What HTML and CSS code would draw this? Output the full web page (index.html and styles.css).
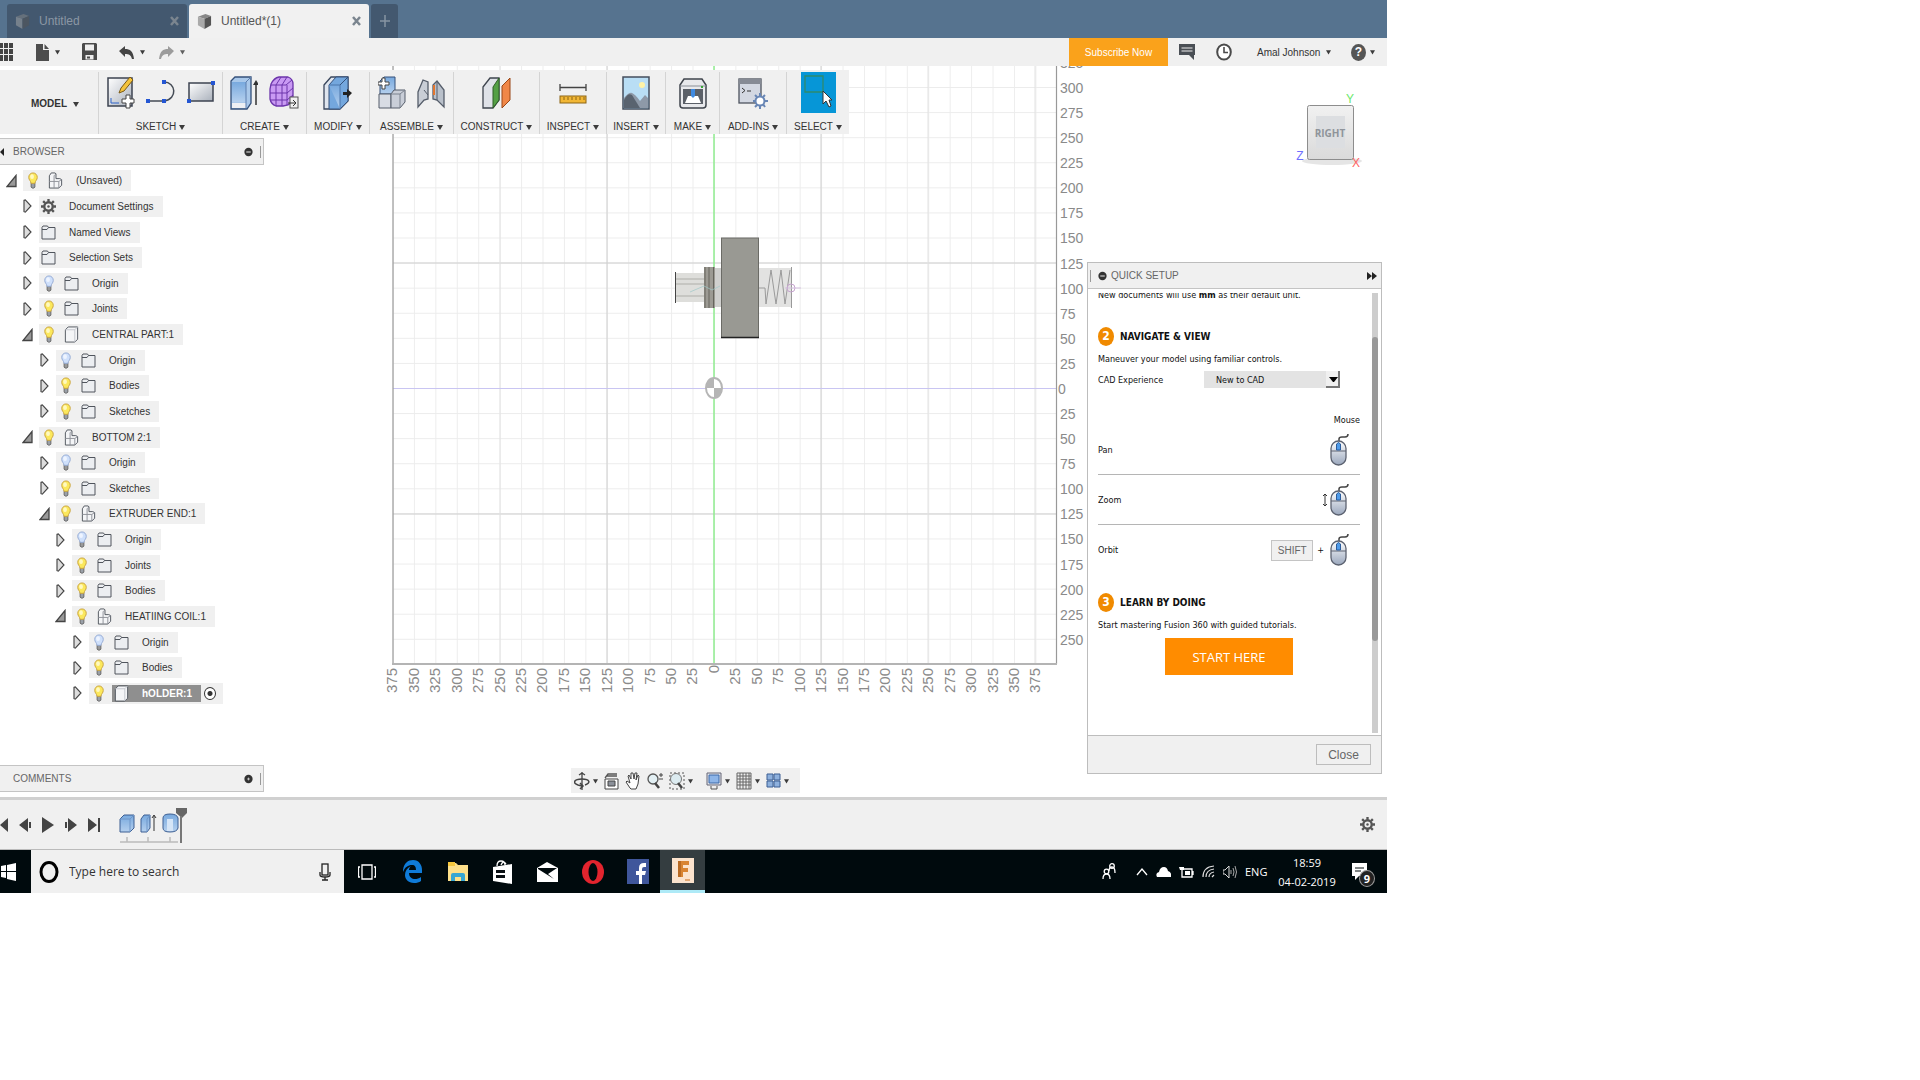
FILE: index.html
```
<!DOCTYPE html>
<html lang="en">
<head>
    <meta charset="UTF-8">
    <meta name="viewport" content="width=device-width, initial-scale=1.0">
    <title>Untitled*(1) - Fusion 360</title>
    <link rel="stylesheet" href="styles.css">
</head>
<body>
    <!-- shared icons -->
    <svg class="defs" width="0" height="0">
        <defs>
            <linearGradient id="g-grey" x1="0" y1="0" x2="1" y2="1"><stop offset="0" stop-color="#fff"/><stop offset="1" stop-color="#a9b0bb"/></linearGradient>
            <linearGradient id="g-blue" x1="0" y1="0" x2="0" y2="1"><stop offset="0" stop-color="#78a9de"/><stop offset="1" stop-color="#b5d0ee"/></linearGradient>
            <linearGradient id="g-cube" x1="0" y1="0" x2="0" y2="1"><stop offset="0" stop-color="#f1f1f1"/><stop offset="1" stop-color="#dadada"/></linearGradient>
            <linearGradient id="g-mouse" x1="0" y1="0" x2="0" y2="1"><stop offset="0" stop-color="#fff"/><stop offset="1" stop-color="#9aa7bd"/></linearGradient>
        </defs>
        <symbol id="bulb-on" viewBox="0 0 12 18"><path d="M4 11h4v5l-1 1H5l-1-1z" fill="#9aa0a8" stroke="#666"/><path d="M6 1a4.500 4.500 0 0 0-4.500 4.800C1.500 8.500 3.500 9 4 12h4c.5-3 2.500-3.500 2.500-6.200A4.500 4.500 0 0 0 6 1z" fill="#fbe85c" stroke="#c9a23c"/><ellipse cx="5" cy="5" rx="2" ry="2.500" fill="#fff9c0"/></symbol>
        <symbol id="bulb-off" viewBox="0 0 12 18"><path d="M4 11h4v5l-1 1H5l-1-1z" fill="#999" stroke="#666"/><path d="M6 1a4.500 4.500 0 0 0-4.500 4.800C1.500 8.500 3.500 9 4 12h4c.5-3 2.500-3.500 2.500-6.200A4.500 4.500 0 0 0 6 1z" fill="#cfe0fb" stroke="#93a9d3"/><ellipse cx="5" cy="5" rx="2" ry="2.500" fill="#eef4ff"/></symbol>
        <symbol id="folder" viewBox="0 0 15 16"><path d="M1 14.500V3L2 1.500h4.500l1 1.500h6.500v11.500z" fill="#eceef1" stroke="#50555d"/><path d="M1 5h5l1.500-2" fill="none" stroke="#50555d"/></symbol>
        <symbol id="body" viewBox="0 0 15 18"><path d="M1 4l3-3h10v13l-3 3H1z" fill="#f4f5f7" stroke="#50555d" stroke-linejoin="round"/><path d="M1 4h10l3-3M11 4v13" fill="none" stroke="#c2c6cc"/></symbol>
        <symbol id="component" viewBox="0 0 15 18"><path d="M1 4l2-3h4l1 1v5h4l2 1v6l-3 3H1z" fill="#f4f5f7" stroke="#50555d" stroke-linejoin="round"/><path d="M6 4v13M6 10h5l3-2M11 10v7M1 10h5M6 4l2-2" fill="none" stroke="#8d9198"/></symbol>
        <symbol id="gear" viewBox="0 0 16 16"><circle cx="8" cy="8" r="4.500" fill="none" stroke="#555" stroke-width="2.500"/><circle cx="8" cy="8" r="1.300" fill="#555"/><path d="M8 0v3M8 13v3M0 8h3M13 8h3M2.300 2.300l2 2M11.700 11.700l2 2M2.300 13.700l2-2M11.700 4.300l2-2" stroke="#555" stroke-width="2.500"/></symbol>
        <symbol id="closed" viewBox="0 0 10 16"><path d="M1 1.500l1.500-.5L9 8l-6.500 7L1 14.500z" fill="#ddd" stroke="#444" stroke-width="1.300"/></symbol>
        <symbol id="open" viewBox="0 0 11 13"><path d="M10 1v11H1z" fill="#999" stroke="#444" stroke-width="1.300"/></symbol>
        <symbol id="caret" viewBox="0 0 6 6"><path d="M0 1h6L3 6z" fill="#3c3c3c"/></symbol>
        <symbol id="minus" viewBox="0 0 10 10"><circle cx="5" cy="5" r="4.600" fill="#333"/><path d="M2.500 5h5" stroke="#fff"/></symbol>
        <symbol id="plus" viewBox="0 0 10 10"><circle cx="5" cy="5" r="4.600" fill="#333"/><path d="M3.500 5h3M5 3.500v3" stroke="#ccc"/></symbol>
        <symbol id="doc" viewBox="0 0 16 18"><path d="M1 4l8-3 6 2-7 3z" fill="#888"/><path d="M1 4l7 2v11l-7-4z" fill="#aaa"/><path d="M8 6l7-3v10l-7 4z" fill="#555"/></symbol>
        <symbol id="mouse" viewBox="0 0 22 32"><path d="M11 8V5q0-2 3-2h3q3 0 3-3" fill="none" stroke="#444" stroke-width="1.500"/><rect x="3" y="7" width="15" height="24" rx="7.500" fill="url(#g-mouse)" stroke="#5c6270" stroke-width="1.300"/><path d="M3 17h15" stroke="#5c6270"/><path d="M8.500 16V10q2-3 4 0v6z" fill="#4e9bea" stroke="#2c5d9c"/></symbol>
    </svg>

    <div class="app">
        <header class="tabs">
            <div class="tab">
                <svg class="tab-icon" viewBox="0 0 16 18"><use href="#doc"/></svg>
                <span>Untitled</span>
                <button class="tab-close" aria-label="Close Untitled"><svg width="9" height="10" viewBox="0 0 9 10"><path d="M1 1l7 8M8 1l-7 8" stroke="currentColor" stroke-width="2.500"/></svg></button>
            </div>
            <div class="tab active">
                <svg class="tab-icon" viewBox="0 0 16 18"><use href="#doc"/></svg>
                <span>Untitled*(1)</span>
                <button class="tab-close" aria-label="Close Untitled*(1)"><svg width="9" height="10" viewBox="0 0 9 10"><path d="M1 1l7 8M8 1l-7 8" stroke="currentColor" stroke-width="2.500"/></svg></button>
            </div>
            <button class="tab-new" aria-label="New tab"><svg width="10" height="12" viewBox="0 0 10 12"><path d="M0 6h10M5 0v12" stroke="#8794a3" stroke-width="1.500"/></svg></button>
        </header>

        <div class="quickbar">
            <button class="qb-grid" aria-label="Data panel"><svg width="14" height="18" viewBox="0 0 14 18"><path d="M0 0h3v5H0zM4 0h4v5H4zM9 0h4v5H9zM0 6h3v5H0zM4 6h4v5H4zM9 6h4v5H9zM0 12h3v6H0zM4 12h4v6H4zM9 12h4v6H9z" fill="#444"/></svg></button>
            <button class="qb-file" aria-label="File"><svg width="13" height="17" viewBox="0 0 13 17"><path d="M0 0h7v6h6v11H0zM8.500 0L13 5H8.500z" fill="#4d4d4d"/></svg><svg class="caret"><use href="#caret"/></svg></button>
            <button class="qb-save" aria-label="Save"><svg width="15" height="18" viewBox="0 0 15 18"><path d="M1 0h13l1 1v16H0V1z" fill="#4a4a4a"/><path d="M3 1.500h9v6H3zM3.500 12h8v4.500h-8z" fill="#eee"/><path d="M5 13.500h3v2H5z" fill="#4a4a4a"/></svg></button>
            <button class="qb-undo" aria-label="Undo"><svg width="15" height="13" viewBox="0 0 15 13"><path d="M0 5l6-5v3c5 0 8 2 9 10h-2c-1-4-3-5-7-5v3z" fill="#444"/></svg><svg class="caret"><use href="#caret"/></svg></button>
            <button class="qb-redo" aria-label="Redo"><svg width="15" height="13" viewBox="0 0 15 13"><path d="M15 5L9 0v3C4 3 1 5 0 13h2c1-4 3-5 7-5v3z" fill="#888"/></svg><svg class="caret"><use href="#caret"/></svg></button>
            <div class="qb-right">
                <button class="subscribe">Subscribe Now</button>
                <button class="qb-chat" aria-label="Comments"><svg width="16" height="16" viewBox="0 0 16 16"><path d="M0 0h16v11h-1v5l-5-5H0z" fill="#4a4f55"/><path d="M2.500 4h11M2.500 7h11" stroke="#eee"/></svg></button>
                <button class="qb-clock" aria-label="Job status"><svg width="16" height="18" viewBox="0 0 16 18"><ellipse cx="8" cy="9" rx="6.800" ry="7.500" fill="#fff" stroke="#4a4a4a" stroke-width="2"/><path d="M8 4v5.500h4" fill="none" stroke="#4a4a4a" stroke-width="1.600"/></svg></button>
                <button class="qb-user">Amal Johnson<svg class="caret"><use href="#caret"/></svg></button>
                <button class="qb-help" aria-label="Help"><span class="help-dot">?</span><svg class="caret"><use href="#caret"/></svg></button>
            </div>
        </div>

        <main class="workspace">
            <svg class="scene" viewBox="0 66 1387 731" preserveAspectRatio="xMinYMin meet">
                <defs>
                    <pattern id="cells" x="713.950" y="388" width="21.430" height="25.080" patternUnits="userSpaceOnUse"><path d="M0 0h21.430M0 0v25.080" fill="none" stroke="#ececec" stroke-width="1.800"/></pattern>
                </defs>
                <rect x="393" y="66" width="663" height="598" fill="url(#cells)"/>
                <path d="M607 66v598M821 66v598M393 263h663M393 514h663" stroke="#cfcfcf"/>
                <path d="M500 66v598M928 66v598M1035 66v598" stroke="#e2e2e2"/>
                <path d="M393 388.500h663" stroke="#c9c5f2"/>
                <path d="M714 66v598" stroke="#8fec8f" stroke-width="1.500"/>
                <path d="M393 66v598M1056.500 66v598" stroke="#999" stroke-width="1.200"/>
                <path d="M392 664h665" stroke="#b4b4b4" stroke-width="2"/>

                <!-- extruder model -->
                <rect x="675" y="273" width="30" height="29" fill="#dededb"/>
                <path d="M675 279h30M675 284h30M675 296h30" stroke="#c6c6c2" stroke-width="2"/>
                <path d="M675.500 272v31" stroke="#444"/>
                <rect x="704" y="267" width="11" height="41" fill="#9c9a93"/>
                <path d="M705 267v41M709 267v41M713.500 267v41" stroke="#66645d"/>
                <rect x="715" y="268" width="7" height="39" fill="#d0d0ce"/>
                <path d="M690 292l14-6 8 4 8-4" fill="none" stroke="#9fc9c9" stroke-opacity=".7"/>
                <rect x="759" y="268" width="32" height="39" fill="#e2e2e1"/>
                <path d="M759 288h6l1 16 5-34 5 34 5-34 4 34 5-34" fill="none" stroke="#9a9a9a" stroke-linejoin="round"/>
                <path d="M791.500 267v41" stroke="#999"/>
                <circle cx="791" cy="288" r="4" fill="none" stroke="#c7a4cf"/>
                <path d="M785 288h16" stroke="#d5bfe0"/>
                <rect x="721" y="238" width="38" height="100" fill="#999993"/>
                <path d="M721 238h38M721.500 238v100M758.500 238v100" stroke="#6b6b66"/>
                <path d="M721 337.500h38" stroke="#222" stroke-width="1.500"/>
                <ellipse cx="714" cy="388" rx="8" ry="10" fill="#fff" stroke="#b5b5b5" stroke-width="2"/>
                <path d="M714 388v-10a8 10 0 0 0-8 10zM714 388v10a8 10 0 0 0 8-10z" fill="#b5b5b5"/>

                <g class="ruler">
                    <text x="1060" y="68">325</text><text x="1060" y="93">300</text><text x="1060" y="118">275</text>
                    <text x="1060" y="143">250</text><text x="1060" y="168">225</text><text x="1060" y="193">200</text>
                    <text x="1060" y="218">175</text><text x="1060" y="243">150</text><text x="1060" y="269">125</text>
                    <text x="1060" y="294">100</text><text x="1060" y="319">75</text><text x="1060" y="344">50</text>
                    <text x="1060" y="369">25</text><text x="1058" y="394">0</text><text x="1060" y="419">25</text>
                    <text x="1060" y="444">50</text><text x="1060" y="469">75</text><text x="1060" y="494">100</text>
                    <text x="1060" y="519">125</text><text x="1060" y="544">150</text><text x="1060" y="570">175</text>
                    <text x="1060" y="595">200</text><text x="1060" y="620">225</text><text x="1060" y="645">250</text>
                </g>
                <g class="ruler ruler-x" transform="rotate(-90)">
                    <text x="-668" y="397">375</text><text x="-668" y="419">350</text><text x="-668" y="440">325</text>
                    <text x="-668" y="462">300</text><text x="-668" y="483">275</text><text x="-668" y="505">250</text>
                    <text x="-668" y="526">225</text><text x="-668" y="547">200</text><text x="-668" y="569">175</text>
                    <text x="-668" y="590">150</text><text x="-668" y="612">125</text><text x="-668" y="633">100</text>
                    <text x="-668" y="655">75</text><text x="-668" y="676">50</text><text x="-668" y="697">25</text>
                    <text x="-665" y="719">0</text><text x="-668" y="740">25</text><text x="-668" y="762">50</text>
                    <text x="-668" y="783">75</text><text x="-668" y="805">100</text><text x="-668" y="826">125</text>
                    <text x="-668" y="848">150</text><text x="-668" y="869">175</text><text x="-668" y="890">200</text>
                    <text x="-668" y="912">225</text><text x="-668" y="933">250</text><text x="-668" y="955">275</text>
                    <text x="-668" y="976">300</text><text x="-668" y="998">325</text><text x="-668" y="1019">350</text>
                    <text x="-668" y="1040">375</text>
                </g>

                <!-- view cube -->
                <ellipse cx="1332" cy="161" rx="30" ry="4" fill="#ccc" fill-opacity=".5"/>
                <rect x="1307.500" y="105.500" width="46" height="54" rx="2" fill="url(#g-cube)" stroke="#8d8d8d"/>
                <rect x="1316" y="116" width="29" height="32" fill="#dcdee1"/>
                <text class="cube-face" x="1330" y="137">RIGHT</text>
                <text class="axis axis-y" x="1350" y="103">Y</text>
                <text class="axis axis-x" x="1356" y="167">X</text>
                <text class="axis axis-z" x="1300" y="160">Z</text>
            </svg>

            <nav class="toolbar">
                <button class="mode">MODEL<svg class="caret"><use href="#caret"/></svg></button>
                <div class="group sketch">
                    <div class="icons">
                        <svg width="28" height="34" viewBox="0 0 28 34"><rect x="1" y="2" width="24" height="28" fill="url(#g-grey)" stroke="#3c4350" stroke-width="1.500"/><path d="M4 27h8M4 27v-5" stroke="#2c63c9"/><path d="M12 17l2-5 9-11 3 3-9 11z" fill="#f4c33c" stroke="#7a5a17"/><path d="M19 19h4v4h4v4h-4v5h-4v-5h-4v-4h4z" fill="#fff" stroke="#444"/></svg>
                        <svg width="30" height="34" viewBox="0 0 30 34"><path d="M2 25h16c14-2 12-19 0-19" fill="none" stroke="#444b55" stroke-width="1.500"/><path d="M0 23h4v4H0zM16 23h4v4h-4zM16 4h4v4h-4z" fill="#2456d3"/></svg>
                        <svg width="28" height="34" viewBox="0 0 28 34"><rect x="2" y="7" width="24" height="18" fill="url(#g-grey)" stroke="#3c4350" stroke-width="1.500"/><path d="M0 23h4v4H0zM24 5h4v4h-4z" fill="#2456d3"/></svg>
                    </div>
                    <button>SKETCH<svg class="caret"><use href="#caret"/></svg></button>
                </div>
                <div class="group create">
                    <div class="icons">
                        <svg width="28" height="34" viewBox="0 0 28 34"><path d="M1 5l4-4h16v26l-4 6H1z" fill="#a9c8ea" stroke="#34507a" stroke-width="1.300"/><path d="M2 6h14v20H2z" fill="url(#g-blue)"/><path d="M2 27h14v5H2z" fill="#eef0f4"/><path d="M16 6l5-5M16 6v26" stroke="#5e7fae"/><path d="M26 7v22" stroke="#333" stroke-width="1.500"/><path d="M23 9l3-5 3 5z" fill="#333"/></svg>
                        <svg width="30" height="34" viewBox="0 0 30 34"><path d="M2 8q3-6 8-7h9q5 2 5 7v12q0 6-5 9l-5 1H7q-5-2-6-7V13z" fill="#c99af3" stroke="#6c35ab" stroke-width="1.300"/><path d="M2 9h15l6-5M1 17h17l6-5M2 24h16l6-5M7 9v21M13 9v21M18 9v20M7 9l5-8M13 9l5-8" fill="none" stroke="#6c35ab"/><rect x="21" y="21" width="8" height="11" fill="#f0f0f0" stroke="#555"/><path d="M19 27h7M24 24l3 3-3 3" fill="none" stroke="#333"/></svg>
                    </div>
                    <button>CREATE<svg class="caret"><use href="#caret"/></svg></button>
                </div>
                <div class="group modify">
                    <div class="icons">
                        <svg width="30" height="34" viewBox="0 0 30 34"><path d="M1 9l7-8h17v24l-8 8H1z" fill="#dfe5ee" stroke="#39465c" stroke-width="1.300"/><path d="M6 9l7-8h12v24l-8 8H6z" fill="#74a7dd" stroke="#34507a"/><path d="M6 9h11v24" fill="url(#g-blue)" stroke="#4c76ab"/><path d="M17 9l8-8" stroke="#34507a"/><path d="M20 16h4v-3l5 4-5 5v-3h-4z" fill="#222"/></svg>
                    </div>
                    <button>MODIFY<svg class="caret"><use href="#caret"/></svg></button>
                </div>
                <div class="group assemble">
                    <div class="icons">
                        <svg width="28" height="34" viewBox="0 0 28 34"><path d="M2 5l4-4h11v17H2z" fill="url(#g-blue)" stroke="#34507a"/><path d="M1 18h12v14H1z" fill="#d8dce4" stroke="#555d6a"/><path d="M13 18l3-4h11v12l-5 6h-9z" fill="#c9ced8" stroke="#555d6a"/><path d="M13 18h9v14M22 18l5-4" fill="none" stroke="#7b828e"/><path d="M4 2h3v4h4v3H7v4H4V9H0V6h4z" fill="#fff" stroke="#444"/></svg>
                        <svg width="28" height="34" viewBox="0 0 28 34"><path d="M1 31V16L6 4l5 2v17l-4 1z" fill="#c9ced6" stroke="#555d6a" stroke-width="1.300"/><path d="M27 31V14L20 5l-4 4v14l4 1z" fill="#b9c0ca" stroke="#555d6a" stroke-width="1.300"/><path d="M7 14l4 5M20 6v18" stroke="#555d6a"/><path d="M17 9v10" stroke="#e2752e" stroke-width="2"/></svg>
                    </div>
                    <button>ASSEMBLE<svg class="caret"><use href="#caret"/></svg></button>
                </div>
                <div class="group construct">
                    <div class="icons">
                        <svg width="30" height="34" viewBox="0 0 30 34"><path d="M1 11l7-9h9v22l-6 8H1z" fill="#dfe2e8" stroke="#3e444e" stroke-width="1.300"/><path d="M11 11l6-9v22l-6 8z" fill="#54a045" stroke="#2f5f28"/><path d="M20 10l8-8v22l-8 8z" fill="#f08748" stroke="#9a4717"/></svg>
                    </div>
                    <button>CONSTRUCT<svg class="caret"><use href="#caret"/></svg></button>
                </div>
                <div class="group inspect">
                    <div class="icons">
                        <svg width="28" height="34" viewBox="0 0 28 34"><path d="M1 8v7M27 8v7M1 11.500h26" stroke="#444" stroke-width="1.300"/><rect x="1" y="20" width="26" height="7" fill="#f2b735" stroke="#8c6414"/><path d="M5 21v3M9 21v3M13 21v3M17 21v3M21 21v3M25 21v3" stroke="#8c6414"/></svg>
                    </div>
                    <button>INSPECT<svg class="caret"><use href="#caret"/></svg></button>
                </div>
                <div class="group insert">
                    <div class="icons">
                        <svg width="28" height="34" viewBox="0 0 28 34"><rect x="1" y="1" width="26" height="32" fill="#b9def5" stroke="#444e5c" stroke-width="1.500"/><circle cx="20" cy="9" r="3" fill="#fff3a6"/><path d="M2 22q5-6 8-5t8 8l5-6 3 3v10H2z" fill="#8e99a8"/><path d="M2 24q4-8 8-5l8 13H2z" fill="#59636f"/></svg>
                    </div>
                    <button>INSERT<svg class="caret"><use href="#caret"/></svg></button>
                </div>
                <div class="group make">
                    <div class="icons">
                        <svg width="28" height="34" viewBox="0 0 28 34"><path d="M1 9l4-6h18l4 6v20q0 3-3 3H4q-3 0-3-3z" fill="#e8e9ec" stroke="#3f444c" stroke-width="1.500"/><path d="M1 10h26" stroke="#8a8f97"/><rect x="4" y="13" width="20" height="15" fill="#5b6068"/><path d="M6 27l3-7h10l3 7z" fill="#fff"/><path d="M12 13h4v7l-2 2-2-2z" fill="#3f8ae0"/><path d="M22 11h2" stroke="#38a838" stroke-width="2"/></svg>
                    </div>
                    <button>MAKE<svg class="caret"><use href="#caret"/></svg></button>
                </div>
                <div class="group addins">
                    <div class="icons">
                        <svg width="30" height="34" viewBox="0 0 30 34"><rect x="1" y="3" width="22" height="24" fill="#d3d8e2" stroke="#4d535e" stroke-width="1.300"/><path d="M1 3h22v5H1z" fill="#868b95"/><path d="M4 12l3 2.500L4 17M9 15h4" fill="none" stroke="#333"/><circle cx="22" cy="25" r="4.500" fill="#fff" stroke="#6886b5" stroke-width="2"/><path d="M22 17v3M22 30v3M15 25h2M27 25h3M17 19l2 2M25 28l2 3M17 31l2-2M25 21l2-2" stroke="#6886b5" stroke-width="2"/></svg>
                    </div>
                    <button>ADD-INS<svg class="caret"><use href="#caret"/></svg></button>
                </div>
                <div class="group select">
                    <div class="icons">
                        <svg class="select-icon" viewBox="0 0 35 41"><path d="M4 4h18v16H4z" fill="none" stroke="#2e8a6d" stroke-width="1.300"/><path d="M22 19v13l3-3 3 6 2-1-2-6h3z" fill="#fff" stroke="#333"/></svg>
                    </div>
                    <button>SELECT<svg class="caret"><use href="#caret"/></svg></button>
                </div>
            </nav>

            <aside class="side">
                <div class="side-head">
                    <span class="collapse"></span>BROWSER
                    <button class="dot" aria-label="Collapse browser"><svg width="9" height="10"><use href="#minus"/></svg></button>
                    <span class="grip"></span>
                </div>
                <ul class="tree">
                    <li class="lv0"><button class="twist" aria-label="Collapse"><svg><use href="#open"/></svg></button><span class="node"><svg class="bulb"><use href="#bulb-on"/></svg><svg class="kind"><use href="#component"/></svg>(Unsaved)</span></li>
                    <li class="lv1"><button class="twist" aria-label="Expand"><svg><use href="#closed"/></svg></button><span class="node plain"><svg class="kind"><use href="#gear"/></svg>Document Settings</span></li>
                    <li class="lv1"><button class="twist" aria-label="Expand"><svg><use href="#closed"/></svg></button><span class="node plain"><svg class="kind"><use href="#folder"/></svg>Named Views</span></li>
                    <li class="lv1"><button class="twist" aria-label="Expand"><svg><use href="#closed"/></svg></button><span class="node plain"><svg class="kind"><use href="#folder"/></svg>Selection Sets</span></li>
                    <li class="lv1"><button class="twist" aria-label="Expand"><svg><use href="#closed"/></svg></button><span class="node"><svg class="bulb"><use href="#bulb-off"/></svg><svg class="kind"><use href="#folder"/></svg>Origin</span></li>
                    <li class="lv1"><button class="twist" aria-label="Expand"><svg><use href="#closed"/></svg></button><span class="node"><svg class="bulb"><use href="#bulb-on"/></svg><svg class="kind"><use href="#folder"/></svg>Joints</span></li>
                    <li class="lv1"><button class="twist" aria-label="Collapse"><svg><use href="#open"/></svg></button><span class="node"><svg class="bulb"><use href="#bulb-on"/></svg><svg class="kind"><use href="#body"/></svg>CENTRAL PART:1</span></li>
                    <li class="lv2"><button class="twist" aria-label="Expand"><svg><use href="#closed"/></svg></button><span class="node"><svg class="bulb"><use href="#bulb-off"/></svg><svg class="kind"><use href="#folder"/></svg>Origin</span></li>
                    <li class="lv2"><button class="twist" aria-label="Expand"><svg><use href="#closed"/></svg></button><span class="node"><svg class="bulb"><use href="#bulb-on"/></svg><svg class="kind"><use href="#folder"/></svg>Bodies</span></li>
                    <li class="lv2"><button class="twist" aria-label="Expand"><svg><use href="#closed"/></svg></button><span class="node"><svg class="bulb"><use href="#bulb-on"/></svg><svg class="kind"><use href="#folder"/></svg>Sketches</span></li>
                    <li class="lv1"><button class="twist" aria-label="Collapse"><svg><use href="#open"/></svg></button><span class="node"><svg class="bulb"><use href="#bulb-on"/></svg><svg class="kind"><use href="#component"/></svg>BOTTOM 2:1</span></li>
                    <li class="lv2"><button class="twist" aria-label="Expand"><svg><use href="#closed"/></svg></button><span class="node"><svg class="bulb"><use href="#bulb-off"/></svg><svg class="kind"><use href="#folder"/></svg>Origin</span></li>
                    <li class="lv2"><button class="twist" aria-label="Expand"><svg><use href="#closed"/></svg></button><span class="node"><svg class="bulb"><use href="#bulb-on"/></svg><svg class="kind"><use href="#folder"/></svg>Sketches</span></li>
                    <li class="lv2"><button class="twist" aria-label="Collapse"><svg><use href="#open"/></svg></button><span class="node"><svg class="bulb"><use href="#bulb-on"/></svg><svg class="kind"><use href="#component"/></svg>EXTRUDER END:1</span></li>
                    <li class="lv3"><button class="twist" aria-label="Expand"><svg><use href="#closed"/></svg></button><span class="node"><svg class="bulb"><use href="#bulb-off"/></svg><svg class="kind"><use href="#folder"/></svg>Origin</span></li>
                    <li class="lv3"><button class="twist" aria-label="Expand"><svg><use href="#closed"/></svg></button><span class="node"><svg class="bulb"><use href="#bulb-on"/></svg><svg class="kind"><use href="#folder"/></svg>Joints</span></li>
                    <li class="lv3"><button class="twist" aria-label="Expand"><svg><use href="#closed"/></svg></button><span class="node"><svg class="bulb"><use href="#bulb-on"/></svg><svg class="kind"><use href="#folder"/></svg>Bodies</span></li>
                    <li class="lv3"><button class="twist" aria-label="Collapse"><svg><use href="#open"/></svg></button><span class="node"><svg class="bulb"><use href="#bulb-on"/></svg><svg class="kind"><use href="#component"/></svg>HEATIING COIL:1</span></li>
                    <li class="lv4"><button class="twist" aria-label="Expand"><svg><use href="#closed"/></svg></button><span class="node"><svg class="bulb"><use href="#bulb-off"/></svg><svg class="kind"><use href="#folder"/></svg>Origin</span></li>
                    <li class="lv4"><button class="twist" aria-label="Expand"><svg><use href="#closed"/></svg></button><span class="node"><svg class="bulb"><use href="#bulb-on"/></svg><svg class="kind"><use href="#folder"/></svg>Bodies</span></li>
                    <li class="lv4"><button class="twist" aria-label="Expand"><svg><use href="#closed"/></svg></button><span class="node current"><svg class="bulb"><use href="#bulb-on"/></svg><label class="picked" for="activate"><svg class="kind"><use href="#body"/></svg>hOLDER:1</label><input type="radio" id="activate" name="active" checked></span></li>
                </ul>
                <div class="side-head">
                    COMMENTS
                    <button class="dot" aria-label="Expand comments"><svg width="9" height="10"><use href="#plus"/></svg></button>
                    <span class="grip"></span>
                </div>
            </aside>

            <section class="setup">
                <div class="setup-head">
                    <span class="grip"></span>
                    <svg width="9" height="10"><use href="#minus"/></svg>
                    <span>QUICK SETUP</span>
                    <button aria-label="Hide panel"><svg width="10" height="8" viewBox="0 0 10 8"><path d="M0 0l5 4-5 4zM5 0l5 4-5 4z" fill="#222"/></svg></button>
                </div>
                <div class="setup-main">
                    <div class="setup-body">
                        <p class="units">New documents will use <b>mm</b> as their default unit.</p>
                        <h2><span class="num">2</span>NAVIGATE &amp; VIEW</h2>
                        <p>Maneuver your model using familiar controls.</p>
                        <div class="cad">
                            <label for="cad">CAD Experience</label>
                            <div class="select-box">
                                <select id="cad"><option>New to CAD</option></select>
                                <span class="select-arrow"></span>
                            </div>
                        </div>
                        <div class="mouse-label">Mouse</div>
                        <div class="nav-row"><span>Pan</span><svg class="mouse"><use href="#mouse"/></svg></div>
                        <div class="nav-row"><span>Zoom</span><svg class="updown" width="6" height="14" viewBox="0 0 6 14"><path d="M3 1v12M1 3l2-2 2 2M1 11l2 2 2-2" fill="none" stroke="#333"/></svg><svg class="mouse"><use href="#mouse"/></svg></div>
                        <div class="nav-row last"><span>Orbit</span><kbd>SHIFT</kbd>+<svg class="mouse"><use href="#mouse"/></svg></div>
                        <h2 class="learn"><span class="num">3</span>LEARN BY DOING</h2>
                        <p>Start mastering Fusion 360 with guided tutorials.</p>
                        <button class="start">START HERE</button>
                    </div>
                    <div class="scroll"><div class="thumb"></div></div>
                </div>
                <div class="setup-foot"><button>Close</button></div>
            </section>

            <div class="viewbar">
                <button aria-label="Orbit"><svg width="16" height="18" viewBox="0 0 16 18"><path d="M8 0v18M5 3l3-2 3 2" fill="none" stroke="#444" stroke-width="1.300"/><path d="M11 13c6-2 5-6-3-6S-2 11 4 13l4 1M6 11l3 3-3 3" fill="none" stroke="#444" stroke-width="1.500"/></svg><svg class="caret"><use href="#caret"/></svg></button>
                <button aria-label="Look at"><svg width="15" height="18" viewBox="0 0 15 18"><path d="M1 7h13v10H1z" fill="#fff" stroke="#444"/><path d="M4 9h7v5H4z" fill="#8b9099" stroke="#444"/><path d="M1 6l3-4h9M3 4h10" fill="none" stroke="#555" stroke-width="1.300"/></svg></button>
                <button aria-label="Pan"><svg width="16" height="18" viewBox="0 0 16 18"><path d="M5 16L1 10l1-1 3 2-2-7 1-1 2 4V1h2l1 6 1-6h2l-1 7 2-5 1 1-1 8-2 5H6z" fill="#fff" stroke="#444"/></svg></button>
                <button aria-label="Zoom"><svg width="16" height="18" viewBox="0 0 16 18"><circle cx="6" cy="7" r="5" fill="#e3f0f4" stroke="#555" stroke-width="1.300"/><path d="M8 11l4 5" stroke="#444" stroke-width="2.500"/><path d="M12 3h4M14 1v4M12 7h4" stroke="#444"/></svg></button>
                <button aria-label="Fit"><svg width="16" height="18" viewBox="0 0 16 18"><path d="M1 17V1h14v16z" fill="none" stroke="#555" stroke-dasharray="2 2"/><circle cx="7" cy="7" r="5.500" fill="#dcebf0" stroke="#777"/><path d="M9 11l4 5" stroke="#444" stroke-width="2.500"/></svg><svg class="caret"><use href="#caret"/></svg></button>
                <button class="display" aria-label="Display settings"><svg width="16" height="18" viewBox="0 0 16 18"><path d="M1 1h14v12H1z" fill="#dfe3ea" stroke="#667"/><path d="M3 3h10v8H3z" fill="#8db5e8" stroke="#3c68a8"/><path d="M5 14v3h6v-3" fill="none" stroke="#555"/></svg><svg class="caret"><use href="#caret"/></svg></button>
                <button aria-label="Grid settings"><svg width="16" height="18" viewBox="0 0 16 18"><path d="M1 1h14v16H1zM4 1v16M7 1v16M10 1v16M13 1v16M1 4h14M1 7h14M1 10h14M1 13h14" fill="#eee" stroke="#666"/></svg><svg class="caret"><use href="#caret"/></svg></button>
                <button aria-label="Viewports"><svg width="15" height="15" viewBox="0 0 15 15"><path d="M1 1h6v6H1zM8 1h6v6H8zM1 8h6v6H1zM8 8h6v6H8z" fill="#8db0dd" stroke="#3d5f93"/></svg><svg class="caret"><use href="#caret"/></svg></button>
            </div>
        </main>

        <div class="timeline">
            <div class="player">
                <button aria-label="Start"><svg width="8" height="14" viewBox="0 0 8 14"><path d="M8 0v14L0 7z"/></svg></button>
                <button aria-label="Step back"><svg width="12" height="14" viewBox="0 0 12 14"><path d="M9 0v14L0 7zM10 4h2v6h-2z"/></svg></button>
                <button aria-label="Play"><svg width="12" height="16" viewBox="0 0 12 16"><path d="M0 0l12 8-12 8z"/></svg></button>
                <button aria-label="Step forward"><svg width="12" height="14" viewBox="0 0 12 14"><path d="M3 0v14l9-7zM0 4h2v6H0z"/></svg></button>
                <button aria-label="End"><svg width="12" height="14" viewBox="0 0 12 14"><path d="M0 0v14l9-7zM10 0h2v14h-2z"/></svg></button>
            </div>
            <svg class="features" width="70" height="36" viewBox="0 0 70 36">
                <path d="M1 34h58M8 29v5M29 29v5M51 29v5" stroke="#bbb" stroke-width="1.500"/>
                <path d="M1 11l4-4h10v13l-4 4H1z" fill="url(#g-blue)" stroke="#3d5f93"/><path d="M1 11h10l4-4M11 11v13" fill="none" stroke="#6f96c9"/>
                <path d="M22 11l3-4h6v13l-3 4h-6z" fill="url(#g-blue)" stroke="#3d5f93"/><path d="M28 11v13M28 11l3-4" stroke="#6f96c9"/><path d="M35 8v15M33 10l2-3 2 3" fill="none" stroke="#333"/>
                <path d="M44 10q0-4 7-4t8 4v10q-1 4-8 4t-7-4z" fill="url(#g-blue)" stroke="#3d5f93"/><path d="M48 11h6v12h-6z" fill="#d5e5f7"/>
                <path d="M57 0h11v5l-5 5-6-5z" fill="#666"/><path d="M62 8v27" stroke="#777" stroke-width="2"/>
            </svg>
            <button class="settings" aria-label="Timeline settings"><svg width="15" height="17" viewBox="0 0 16 16"><use href="#gear"/></svg></button>
        </div>

        <footer class="taskbar">
            <button class="win" aria-label="Start"><svg width="16" height="18" viewBox="0 0 16 18"><path d="M1 3l5-1v6H1zM7 2l9-2v8H7zM1 9h5v6l-5-1zM7 9h9v9l-9-2z" fill="#fff"/></svg></button>
            <div class="search">
                <svg width="20" height="24" viewBox="0 0 20 24"><ellipse cx="10" cy="12" rx="8" ry="9.500" fill="none" stroke="#000" stroke-width="3"/></svg>
                <input type="text" placeholder="Type here to search" aria-label="Search">
                <svg width="12" height="18" viewBox="0 0 12 18"><rect x="3" y="1" width="6" height="11" fill="none" stroke="#222" stroke-width="1.300"/><path d="M1 9v3q0 2 5 2t5-2V9M6 14v3M3 17h6" fill="none" stroke="#222" stroke-width="1.300"/></svg>
            </div>
            <div class="apps">
                <button class="taskview" aria-label="Task view"><svg width="18" height="16" viewBox="0 0 18 16"><path d="M4 1h10v14H4zM2 3H.5v10H2M16 3h1.500v10H16" fill="none" stroke="#fff" stroke-width="1.300"/></svg></button>
                <button aria-label="Edge"><svg width="19" height="23" viewBox="0 0 19 23"><path d="M0 10C1 3 5 0 10 0c6 0 9 5 9 10v3H6c0 4 3 6 6 6 2 0 4-.5 6-2v4c-2 1.500-4 2-7 2-6 0-9-4-9-8 0-4 2-7 6-9-1 1-2 2-2 4h7c0-3-1-5-4-5-4 0-7 2-9 7z" fill="#0f7bd8"/></svg></button>
                <button aria-label="File Explorer"><svg width="20" height="20" viewBox="0 0 20 20"><path d="M0 1h8l2 2h10v16H0z" fill="#fde08a"/><path d="M0 0h7v4H0z" fill="#f6c83e"/><path d="M3 19v-6q0-2 2-2h10q2 0 2 2v6h-4v-4H7v4z" fill="#37a7d3"/></svg></button>
                <button aria-label="Store"><svg width="20" height="24" viewBox="0 0 20 24"><path d="M0 7l19-3v20L0 21z" fill="#fff"/><path d="M4 6q0-5 4-5t4 4M8 5q2-5 5-1" fill="none" stroke="#fff" stroke-width="1.300"/><path d="M3 10h9v3H3zM3 15h9v3H3z" fill="#0a1014"/></svg></button>
                <button aria-label="Mail"><svg width="21" height="20" viewBox="0 0 21 20"><path d="M0 6l10-6 11 6v14H0z" fill="#fff"/><path d="M1 6h19l-9 6 6 5L1 7z" fill="#000a0d"/></svg></button>
                <button aria-label="Opera"><svg width="22" height="24" viewBox="0 0 22 24"><ellipse cx="11" cy="12" rx="11" ry="12" fill="#e3242e"/><ellipse cx="11" cy="12" rx="4.500" ry="9" fill="#000a0d"/></svg></button>
                <button aria-label="Facebook"><svg width="22" height="25" viewBox="0 0 22 25"><path d="M0 0h22v25H0z" fill="#3f569b"/><path d="M12 25v-9H9v-4h3V9q0-5 5-5h2v4h-2q-2 0-2 2v2h4l-1 4h-3v9z" fill="#fff"/></svg></button>
                <button class="running" aria-label="Fusion 360"><svg width="22" height="25" viewBox="0 0 22 25"><path d="M0 0h22v25H0z" fill="#fbe3cd"/><path d="M6 3h11v4h-6v3h5v4h-5v5H6z" fill="#d98432"/><path d="M6 3h3v16H6z" fill="#b96a22"/><path d="M13 22h5" stroke="#e4a873" stroke-width="2"/></svg></button>
            </div>
            <div class="tray">
                <svg width="14" height="17" viewBox="0 0 14 17"><path d="M1 16q0-5 3.500-5t3.500 5M7 8q0-4 3-4t3 6" fill="none" stroke="#fff" stroke-width="1.300"/><circle cx="4.500" cy="8.500" r="2.300" fill="none" stroke="#fff" stroke-width="1.300"/><circle cx="10" cy="3" r="2.300" fill="none" stroke="#fff" stroke-width="1.300"/></svg>
                <svg class="chev" width="12" height="8" viewBox="0 0 12 8"><path d="M1 7l5-6 5 6" fill="none" stroke="#fff" stroke-width="1.300"/></svg>
                <svg width="15" height="10" viewBox="0 0 15 10"><path d="M1 10q-2-4 2-5 1-5 5-5 3 0 4 4 4 1 3 6z" fill="#fff"/></svg>
                <svg width="15" height="12" viewBox="0 0 15 12"><path d="M3 3h10v8H3zM14 5v4" fill="none" stroke="#fff" stroke-width="1.300"/><path d="M6 5h5v4H6z" fill="#fff"/><path d="M0 1h5v3H1z" fill="#fff"/></svg>
                <svg width="13" height="13" viewBox="0 0 13 13"><path d="M1 12Q1 2 12 1M4 12q0-7 8-8M7 12q0-4 5-5M10 12l2-2" fill="none" stroke="#ddd" stroke-width="1.200"/></svg>
                <svg width="14" height="14" viewBox="0 0 14 14"><path d="M0 5h2l4-4v12L2 9H0z" fill="none" stroke="#ddd"/><path d="M8 5v4M10 3q2 4 0 8M12 1q3 6 0 12" fill="none" stroke="#aaa"/></svg>
                <span class="lang">ENG</span>
                <div class="clock"><span>18:59</span><span>04-02-2019</span></div>
                <button class="notes" aria-label="Notifications"><svg width="15" height="17" viewBox="0 0 15 17"><path d="M0 0h15v13H7l-4 4v-4H0z" fill="#fff"/><path d="M3 5h9M3 8h6" stroke="#000a0d"/></svg><span class="badge">9</span></button>
            </div>
        </footer>
    </div>
</body>
</html>
```
FILE: styles.css
```
* {
    box-sizing: border-box;
}
body {
    margin: 0;
    background-color: #ffffff;
    font-family: "Liberation Sans", Arial, sans-serif;
    font-size: 10px;
    color: #333;
}
button {
    display: flex;
    align-items: center;
    padding: 0;
    border: none;
    background: none;
    font: inherit;
    color: inherit;
    cursor: pointer;
}
svg {
    flex: none;
}
.defs {
    position: absolute;
}
.caret {
    width: 5px;
    height: 6px;
}
.app {
    display: flex;
    flex-direction: column;
    width: 72.24vw;
    height: 82.7vh;
    overflow: hidden;
}

/* document tabs */
.tabs {
    display: flex;
    align-items: flex-end;
    gap: 2px;
    height: 38px;
    padding-left: 7px;
    background-color: #56738f;
    font-size: 12px;
}
.tab {
    display: flex;
    align-items: center;
    width: 180px;
    height: 34px;
    padding: 0 8px;
    border-radius: 3px 3px 0 0;
    background-color: #43586f;
    color: #8b97a4;
}
.tab-icon {
    width: 15px;
    height: 17px;
    margin-right: 9px;
    opacity: 0.5;
}
.tab.active {
    background-color: #f1f1f1;
    color: #555;
}
.active .tab-icon {
    opacity: 1;
}
.tab-close {
    margin-left: auto;
    color: #7b858f;
}
.tab-new {
    justify-content: center;
    width: 27px;
    height: 34px;
    border-radius: 3px 3px 0 0;
    background-color: #43586f;
}

/* quick access bar */
.quickbar {
    display: flex;
    align-items: center;
    height: 28px;
    background-color: #f0f0f0;
}
.quickbar button {
    gap: 6px;
}
.qb-grid {
    width: 36px;
}
.qb-file {
    width: 46px;
}
.qb-save {
    width: 37px;
}
.qb-undo {
    width: 40px;
}
.qb-redo {
    opacity: 0.8;
}
.qb-right {
    display: flex;
    align-items: center;
    height: 100%;
    margin-left: auto;
    padding-right: 12px;
}
.quickbar .subscribe {
    justify-content: center;
    width: 99px;
    height: 100%;
    background-color: #faa21b;
    color: #fff;
}
.qb-chat {
    width: 48px;
    padding-left: 11px;
}
.qb-clock {
    width: 41px;
}
.qb-user {
    width: 94px;
}
.quickbar .qb-help {
    gap: 4px;
}
.help-dot {
    width: 15px;
    height: 17px;
    border-radius: 50%;
    background-color: #555;
    color: #fff;
    font-size: 12px;
    font-weight: bold;
    line-height: 17px;
    text-align: center;
}

/* canvas */
.workspace {
    position: relative;
    display: flex;
    flex: 1;
    flex-direction: column;
    align-items: flex-start;
    min-height: 0;
    overflow: hidden;
}
.scene {
    position: absolute;
    top: 0;
    left: 0;
    width: 100%;
    height: 100%;
}
.ruler {
    font-size: 14px;
    fill: #8a8a8a;
}
.ruler-x {
    font-size: 15px;
    text-anchor: end;
}
.cube-face {
    font-family: "Open Sans", sans-serif;
    font-size: 10px;
    font-weight: bold;
    text-anchor: middle;
    fill: #8f949a;
}
.axis {
    font-size: 12px;
    text-anchor: middle;
}
.axis-x {
    fill: #ff6464;
}
.axis-y {
    fill: #6be86b;
}
.axis-z {
    fill: #6f6fff;
}

/* main toolbar */
.toolbar {
    position: relative;
    display: flex;
    height: 64px;
    margin: 4px 0;
    background-color: #f0f0f0;
}
.toolbar .caret {
    width: 6px;
}
.mode {
    gap: 6px;
    width: 98px;
    padding: 3px 0 0 31px;
    font-weight: bold;
}
.group {
    display: flex;
    flex-direction: column;
    align-items: center;
    justify-content: space-between;
    margin-top: 2px;
    border-left: 1px solid #d4d4d4;
}
.group button {
    gap: 3px;
    line-height: 14px;
}
.icons {
    display: flex;
    align-items: center;
    gap: 11px;
    height: 41px;
}
.sketch {
    width: 124px;
}
.create, .assemble {
    width: 84px;
}
.modify, .select {
    width: 63px;
}
.construct {
    width: 86px;
}
.inspect, .addins {
    width: 67px;
}
.insert {
    width: 59px;
}
.make {
    width: 54px;
}
.select-icon {
    width: 35px;
    height: 41px;
    background-color: #0696d7;
}

/* browser tree */
.side {
    position: relative;
    display: flex;
    flex: 1;
    flex-direction: column;
    width: 264px;
    min-height: 0;
    margin-bottom: 5px;
}
.side-head {
    display: flex;
    align-items: center;
    height: 27px;
    padding: 0 2px 0 13px;
    border: 1px solid #c4c4c4;
    border-left: none;
    background-color: #f0f0f0;
    color: #666;
}
.collapse {
    margin: 0 9px 0 -13px;
    border: 4px solid transparent;
    border-left: none;
    border-right-color: #222;
}
.dot {
    margin-left: auto;
}
.grip {
    width: 1px;
    height: 12px;
    background-color: #999;
}
.side-head .grip {
    margin-left: 7px;
}
.tree {
    display: flex;
    flex: 1;
    flex-direction: column;
    margin: 0;
    padding: 3px 0 59px;
    list-style: none;
}
.tree li {
    display: flex;
    flex: 1;
    align-items: center;
}
.twist {
    width: 17px;
}
.twist svg {
    width: 11px;
    height: 14px;
}
.lv0 {
    padding-left: 6px;
}
.lv1 {
    padding-left: 22px;
}
.lv2 {
    padding-left: 39px;
}
.lv3 {
    padding-left: 55px;
}
.lv4 {
    padding-left: 72px;
}
.node {
    display: flex;
    align-items: center;
    height: 21px;
    padding: 0 9px 0 4px;
    background-color: #f0f0f0;
}
.node.plain {
    padding-left: 2px;
}
.bulb {
    width: 12px;
    height: 17px;
    margin-right: 9px;
}
.kind {
    width: 15px;
    height: 17px;
    margin-right: 13px;
}
.node.current {
    padding-right: 7px;
}
.current .bulb {
    margin-right: 7px;
}
.picked {
    display: flex;
    align-items: center;
    height: 17px;
    margin-right: 3px;
    padding: 0 9px 0 2px;
    background-color: #8f8f8f;
    color: #fff;
    font-weight: bold;
}
.node input {
    appearance: none;
    width: 12px;
    height: 13px;
    margin: 0;
    border: 1px solid #333;
    border-radius: 50%;
    background: radial-gradient(circle, #333 2px, #fff 3px);
}

/* quick setup */
.setup {
    position: absolute;
    top: 196px;
    right: 5px;
    bottom: 23px;
    display: flex;
    flex-direction: column;
    width: 295px;
    border: 1px solid #bdbdbd;
    background-color: #fff;
    color: #111;
    font-family: "DejaVu Sans Condensed", "DejaVu Sans", sans-serif;
    font-size: 9px;
}
.setup-head {
    display: flex;
    align-items: center;
    gap: 4px;
    height: 26px;
    padding: 0 4px 0 2px;
    border-bottom: 1px solid #c4c4c4;
    background-color: #f0f0f0;
    color: #666;
    font-family: "Liberation Sans", Arial, sans-serif;
    font-size: 10px;
}
.setup-head .grip {
    margin-right: 3px;
}
.setup-head button {
    margin-left: auto;
}
.setup-main {
    display: flex;
    flex: 1;
    justify-content: space-between;
    min-height: 0;
    padding: 4px 3px 2px 10px;
}
.setup-body {
    width: 262px;
    overflow: hidden;
}
.setup p {
    margin: 0;
    line-height: 14px;
}
.setup .units {
    margin-top: -5px;
}
.setup h2 {
    display: flex;
    align-items: center;
    gap: 6px;
    height: 20px;
    margin: 24px 0 6px;
    font-size: 10px;
}
.num {
    width: 16px;
    height: 19px;
    border-radius: 50%;
    background-color: #f08a00;
    color: #fff;
    font-size: 12px;
    line-height: 19px;
    text-align: center;
}
.cad {
    display: flex;
    align-items: center;
    justify-content: space-between;
    margin-top: 5px;
    padding-right: 20px;
}
.select-box {
    position: relative;
    width: 136px;
}
.select-box select {
    appearance: none;
    width: 100%;
    height: 17px;
    padding: 0 12px;
    border: none;
    background-color: #e3e3e3;
    color: inherit;
    font: inherit;
}
.select-arrow {
    position: absolute;
    top: 0;
    right: 0;
    width: 14px;
    height: 17px;
    border: 1px solid #777;
    border-width: 0 2px 2px 0;
    background-color: #f0f0f0;
    pointer-events: none;
}
.select-arrow::before {
    content: "";
    display: block;
    margin: 6px 0 0 3px;
    border: 4px solid transparent;
    border-top: 5px solid #000;
    border-bottom: none;
}
.mouse-label {
    margin-top: 27px;
    line-height: 10px;
    text-align: right;
}
.nav-row {
    display: flex;
    align-items: center;
    gap: 4px;
    height: 50px;
    padding-right: 10px;
    border-bottom: 1px solid #b5b5b5;
}
.nav-row.last {
    border-bottom: none;
}
.nav-row span {
    margin-right: auto;
}
.updown {
    margin-right: -4px;
}
.mouse {
    width: 22px;
    height: 32px;
}
kbd {
    width: 42px;
    height: 21px;
    border: 1px solid #c4c4c4;
    background-color: #f0f0f0;
    color: #666;
    font-family: "Liberation Sans", Arial, sans-serif;
    font-size: 10px;
    line-height: 19px;
    text-align: center;
}
.setup .learn {
    margin-top: 17px;
}
.start {
    justify-content: center;
    width: 128px;
    height: 37px;
    margin: 6px auto 0;
    background-color: #ff8c00;
    color: #fff;
    font-family: "Open Sans", sans-serif;
    font-size: 13px;
}
.scroll {
    width: 6px;
    background-color: #cdcdcd;
}
.thumb {
    height: 69%;
    margin-top: 44px;
    border-radius: 3px;
    background-color: #999;
}
.setup-foot {
    display: flex;
    align-items: center;
    justify-content: flex-end;
    height: 38px;
    padding-right: 10px;
    border-top: 1px solid #bdbdbd;
    background-color: #f0f0f0;
}
.setup-foot button {
    justify-content: center;
    width: 55px;
    height: 21px;
    border: 1px solid #bdbdbd;
    color: #666;
    font-family: "Liberation Sans", Arial, sans-serif;
    font-size: 12px;
}

/* view controls */
.viewbar {
    position: absolute;
    bottom: 4px;
    left: 571px;
    display: flex;
    align-items: center;
    gap: 6px;
    height: 25px;
    padding: 0 11px 0 3px;
    background-color: #f0f0f0;
}
.viewbar button {
    gap: 3px;
}
.viewbar .display {
    margin-left: 7px;
}

/* timeline */
.timeline {
    display: flex;
    align-items: center;
    height: 53px;
    padding-right: 12px;
    border-top: 3px solid #d0d0d0;
    border-bottom: 1px solid #bbb;
    background-color: #f0f0f0;
}
.player {
    display: flex;
    align-items: center;
    gap: 11px;
    width: 119px;
    fill: #444;
}
.features {
    margin-top: 2px;
}
.settings {
    margin-left: auto;
}

/* windows taskbar */
.taskbar {
    display: flex;
    align-items: center;
    height: 43px;
    background-color: #000a0d;
    color: #fff;
    font-family: "Open Sans", sans-serif;
}
.win {
    width: 31px;
}
.search {
    display: flex;
    align-items: center;
    width: 313px;
    height: 100%;
    padding: 0 13px 0 8px;
    background-color: #f0f0f0;
}
.search input {
    flex: 1;
    min-width: 0;
    margin-left: 8px;
    border: none;
    background: none;
    outline: none;
    font: inherit;
    font-size: 12px;
}
.search input::placeholder {
    color: #333;
}
.apps {
    display: flex;
    height: 100%;
}
.apps button {
    justify-content: center;
    width: 45px;
}
.apps .taskview {
    width: 46px;
}
.apps .running {
    border-bottom: 3px solid #aeeaf7;
    background-color: #343d40;
}
.tray {
    display: flex;
    align-items: center;
    gap: 8px;
    margin-left: auto;
    padding-right: 20px;
}
.chev {
    margin-left: 12px;
}
.lang {
    width: 24px;
    font-size: 11px;
}
.clock {
    display: flex;
    flex-direction: column;
    width: 60px;
    font-size: 11px;
    line-height: 19px;
    text-align: center;
}
.notes {
    position: relative;
    margin-left: 7px;
}
.badge {
    position: absolute;
    top: 7px;
    left: 7px;
    width: 16px;
    height: 17px;
    border: 1px solid #999;
    border-radius: 50%;
    background-color: #222;
    font-size: 11px;
    font-weight: bold;
    line-height: 15px;
    text-align: center;
}
```
